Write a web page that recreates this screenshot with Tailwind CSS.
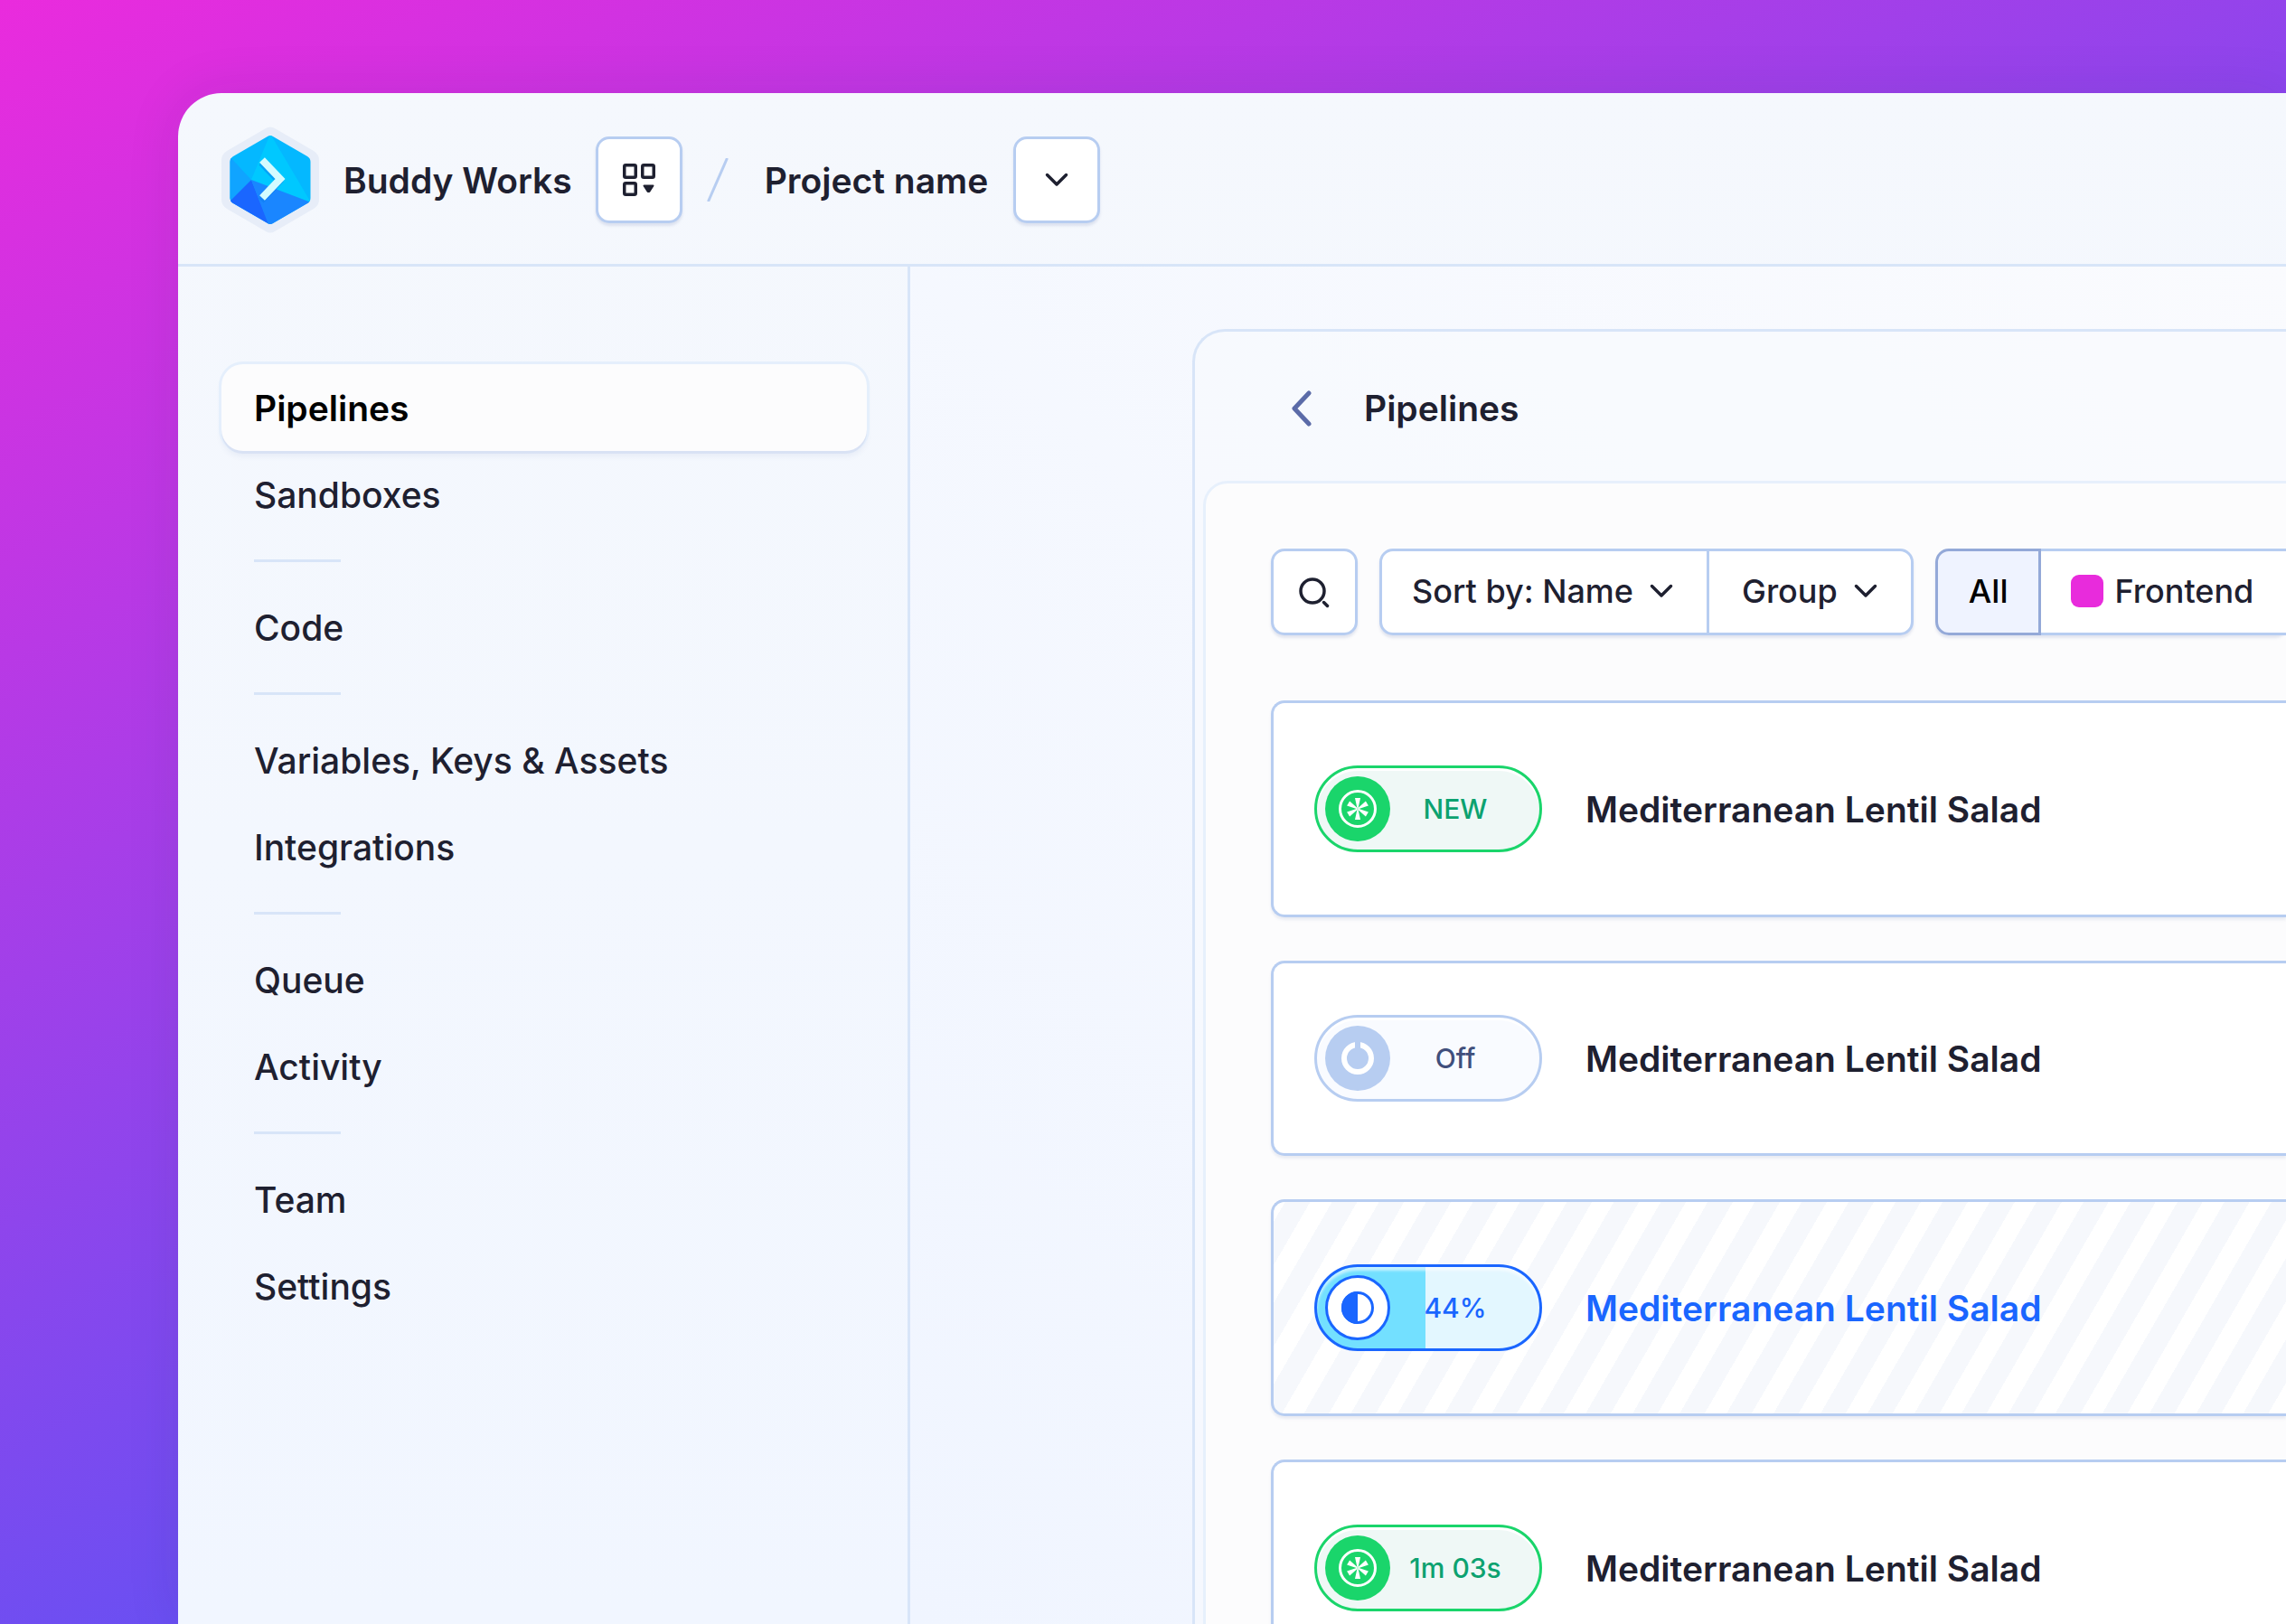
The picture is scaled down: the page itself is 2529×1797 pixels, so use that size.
<!DOCTYPE html>
<html lang="en">
<head>
<meta charset="utf-8">
<title>Buddy Works – Pipelines</title>
<script src="https://cdn.jsdelivr.net/npm/@tailwindcss/browser@4"></script>
</head>
<body class="h-screen overflow-hidden bg-[linear-gradient(153deg,#ea2bdd_0%,#1a66ff_100%)] pl-[197px] pt-[103px] font-['Inter',sans-serif] text-[#1e2030] antialiased">
<svg class="hidden" aria-hidden="true">
  <symbol id="chevron" viewBox="0 0 28 18"><path d="M3.500 3.500L14 14 24.500 3.500" fill="none" stroke="currentColor" stroke-width="3.500" stroke-linecap="round" stroke-linejoin="round"/></symbol>
  <symbol id="wheel" viewBox="0 0 42 42">
    <circle cx="21" cy="21" r="19.500" fill="none" stroke="#fff" stroke-width="3"/>
    <g fill="#fff">
      <path id="petal" d="M18 9h6l-2.500 11.500h-1z"/>
      <use href="#petal" transform="rotate(60 21 21)"/>
      <use href="#petal" transform="rotate(120 21 21)"/>
      <use href="#petal" transform="rotate(180 21 21)"/>
      <use href="#petal" transform="rotate(240 21 21)"/>
      <use href="#petal" transform="rotate(300 21 21)"/>
    </g>
  </symbol>
</svg>
<div class="flex h-full flex-col overflow-hidden rounded-tl-[48px] bg-linear-to-b from-[#f5f8fd] to-[#f1f6ff] shadow-[0_0_60px_rgba(30,30,80,0.1)]">
  <header class="flex shrink-0 items-center border-b-3 border-[#d8e5f8] pt-12 pb-[45px] pl-12 text-[39px] leading-12 font-semibold">
    <svg class="-my-3 h-[120px] w-[108px] shrink-0" viewBox="0 0 108 120" role="img" aria-label="Buddy">
      <path d="M49 3q5-3 10 0l43 25q6 4 6 10v44q0 6-6 10l-43 25q-5 3-10 0L6 92q-6-4-6-10V38q0-6 6-10z" fill="#e7edf8"/>
      <clipPath id="hex"><path d="M51 12q3-2 6 0l38 22q3.500 2 3.500 6v40q0 4-3.500 6l-38 22q-3 2-6 0L13 86q-3.500-2-3.500-6V40q0-4 3.500-6z"/></clipPath>
      <g clip-path="url(#hex)">
        <path d="M0 0h108v120H0z" fill="#04b8ff"/>
        <path d="M54 9L99 85 33 60z" fill="#00c8ff"/>
        <path d="M9 34l24 26L9 87z" fill="#10a4ff"/>
        <path d="M33 60L54 112 0 120V93z" fill="#1a66ff"/>
        <path d="M33 60L99 85v30H54z" fill="#1a86ff"/>
      </g>
      <path d="M44 41l20 21-20 21" fill="none" stroke="#0a7cf0" stroke-opacity=".5" stroke-width="7"/>
      <path d="M45 38l20 21-20 21" fill="none" stroke="#d4fbff" stroke-width="8"/>
    </svg>
    <span class="ml-[27px] pt-0.5">Buddy Works</span>
    <button aria-label="Switch workspace" class="ml-[26px] grid size-24 place-items-center rounded-[15px] border-3 border-[#b7cdf1] bg-white shadow-[0_3px_3px_rgba(80,100,160,0.15)]">
      <svg class="size-9" viewBox="0 0 36 36" fill="none" stroke="currentColor" stroke-width="3.500">
        <rect x="1.750" y="1.750" width="12.500" height="13.500" rx="1.500"/><rect x="21.750" y="1.750" width="12.500" height="13.500" rx="1.500"/><rect x="1.750" y="21.750" width="12.500" height="12.500" rx="1.500"/>
        <path d="M23.500 24.500h10l-4.200 6.500h-1.600z" fill="currentColor" stroke-width="2" stroke-linejoin="round"/>
      </svg>
    </button>
    <svg class="ml-[27px] h-12 w-6" viewBox="0 0 24 48"><path d="M1.500 48L22.500 0" stroke="#b7cdf1" stroke-width="3"/></svg>
    <span class="ml-10 pt-0.5">Project name</span>
    <button aria-label="Switch project" class="ml-7 grid size-24 place-items-center rounded-[15px] border-3 border-[#b7cdf1] bg-white shadow-[0_3px_3px_rgba(80,100,160,0.15)]"><svg class="h-[18px] w-7"><use href="#chevron"/></svg></button>
  </header>
  <div class="flex min-h-0 flex-1">
    <nav class="w-[810px] shrink-0 border-r-3 border-[#d8e5f8] pt-[108px] pr-[45px] pl-12 text-[39px] leading-12 font-medium">
      <a href="#" aria-current="page" class="flex h-24 items-center rounded-3xl bg-[#fcfcfd] px-9 pt-0.5 font-semibold text-black shadow-[0_3px_0_#d9e2f4,0_0_0_3px_#e5effc,0_6px_6px_rgba(80,100,160,0.08)]">Pipelines</a>
      <a href="#" class="flex h-24 items-center px-9 pt-0.5">Sandboxes</a>
      <hr class="mx-9 my-6 w-24 border-t-3 border-[#d8e5f8]">
      <a href="#" class="flex h-24 items-center px-9 pt-0.5">Code</a>
      <hr class="mx-9 my-6 w-24 border-t-3 border-[#d8e5f8]">
      <a href="#" class="flex h-24 items-center px-9 pt-0.5">Variables, Keys &amp; Assets</a>
      <a href="#" class="flex h-24 items-center px-9 pt-0.5">Integrations</a>
      <hr class="mx-9 my-6 w-24 border-t-3 border-[#d8e5f8]">
      <a href="#" class="flex h-24 items-center px-9 pt-0.5">Queue</a>
      <a href="#" class="flex h-24 items-center px-9 pt-0.5">Activity</a>
      <hr class="mx-9 my-6 w-24 border-t-3 border-[#d8e5f8]">
      <a href="#" class="flex h-24 items-center px-9 pt-0.5">Team</a>
      <a href="#" class="flex h-24 items-center px-9 pt-0.5">Settings</a>
    </nav>
    <main class="min-w-0 flex-1 bg-linear-to-bl from-[#fafbfe] to-[#f0f5ff] pt-[69px] pl-78">
      <div class="rounded-tl-[36px] border-t-3 border-l-3 border-[#d8e5f8] bg-[#f8fafd]/60 pl-[9px]">
        <div class="flex h-[165px] items-center pt-1 pl-24 text-[39px] leading-12 font-semibold">
          <a href="#" aria-label="Back"><svg class="h-10 w-6" viewBox="0 0 24 40"><path d="M21 3L5 20l16 17" fill="none" stroke="#5b6ba8" stroke-width="5" stroke-linecap="round" stroke-linejoin="round"/></svg></a>
          <h1 class="ml-[58px]">Pipelines</h1>
        </div>
        <div class="rounded-tl-[27px] border-t-3 border-l-3 border-[#e7f0fc] bg-[#fcfcfd] pt-18 pl-18">
          <div class="flex gap-6 text-[36px] leading-12 font-medium whitespace-nowrap">
            <button aria-label="Search" class="grid size-24 shrink-0 place-items-center rounded-[15px] border-3 border-[#b7cdf1] bg-white shadow-[0_3px_3px_rgba(80,100,160,0.15)]">
              <svg class="size-9" viewBox="0 0 36 36" fill="none" stroke="currentColor" stroke-width="3.500" stroke-linecap="round"><circle cx="16" cy="17" r="13"/><path d="M28.500 29.500l4 4"/></svg>
            </button>
            <div class="flex h-24 shrink-0 rounded-[15px] border-3 border-[#b7cdf1] bg-white shadow-[0_3px_3px_rgba(80,100,160,0.15)]">
              <button class="flex items-center gap-[17px] border-r-3 border-[#b7cdf1] pr-9 pb-0.5 pl-[33px]">Sort by: Name <svg class="h-[18px] w-7"><use href="#chevron"/></svg></button>
              <button class="flex items-center gap-[17px] px-9 pb-0.5">Group <svg class="h-[18px] w-7"><use href="#chevron"/></svg></button>
            </div>
            <div class="flex h-24 shrink-0 rounded-[15px] shadow-[0_3px_3px_rgba(80,100,160,0.15)]">
              <button class="rounded-l-[15px] border-3 border-[#94a9d8] bg-[#eff3ff] px-[34px] pb-0.5 text-black">All</button>
              <button class="flex items-center gap-3 border-y-3 border-r-3 border-[#b7cdf1] bg-white pr-9 pb-0.5 pl-[33px]"><span class="size-9 rounded-[9px] bg-[#e82bdc]"></span>Frontend</button>
            </div>
          </div>
          <ul class="mt-18 flex flex-col gap-12 text-[39px] leading-12 font-semibold">
            <li class="flex h-60 items-center gap-12 rounded-l-[15px] border-3 border-r-0 border-[#b7cdf1] bg-white pl-[45px] shadow-[0_3px_3px_rgba(80,100,160,0.1)]">
              <button class="flex h-24 w-63 items-center rounded-full border-3 border-[#1ad56b] bg-[#eff8f6] pr-[21px] pl-[9px] text-[30px] font-medium text-[#0ca270] shadow-[inset_0_3px_0_#fff]"><span class="grid size-18 place-items-center rounded-full bg-[#1ad56b]"><svg class="size-[42px]"><use href="#wheel"/></svg></span><span class="flex-1">NEW</span></button>
              <a href="#" class="pt-0.5">Mediterranean Lentil Salad</a>
            </li>
            <li class="flex h-54 items-center gap-12 rounded-l-[15px] border-3 border-r-0 border-[#b7cdf1] bg-white pl-[45px] shadow-[0_3px_3px_rgba(80,100,160,0.1)]">
              <button class="flex h-24 w-63 items-center rounded-full border-3 border-[#b7cdf1] bg-[#f9fbff] pr-[21px] pl-[9px] text-[30px] font-medium text-[#404f7c] shadow-[inset_0_3px_0_#fff]"><span class="grid size-18 place-items-center rounded-full bg-[#b7cdf1]"><svg class="size-9" viewBox="0 0 36 36"><circle cx="18" cy="18" r="15" fill="none" stroke="#fff" stroke-width="6"/><path d="M15 0h6v8h-6z" fill="#b7cdf1"/></svg></span><span class="flex-1">Off</span></button>
              <a href="#" class="pt-0.5">Mediterranean Lentil Salad</a>
            </li>
            <li class="flex h-60 items-center gap-12 rounded-l-[15px] border-3 border-r-0 border-[#b7cdf1] bg-white bg-[repeating-linear-gradient(120deg,#fff_0_11px,#f6f8fc_11px_35px,#fff_35px_45px)] pl-[45px] text-[#1a66ff] shadow-[0_3px_3px_rgba(80,100,160,0.1)]">
              <button class="flex h-24 w-63 items-center rounded-full border-3 border-[#1a66ff] bg-[linear-gradient(90deg,#73e0ff_120px,#e3f7ff_120px)] pr-[21px] pl-[9px] text-[30px] font-medium shadow-[inset_0_4px_3px_rgba(255,255,255,0.6)]"><span class="grid size-18 place-items-center rounded-full border-3 border-[#1a66ff] bg-white"><svg class="size-9" viewBox="0 0 36 36"><circle cx="18" cy="18" r="16.500" fill="none" stroke="#1a66ff" stroke-width="3"/><path d="M18 0a18 18 0 0 0 0 36z" fill="#1a66ff"/></svg></span><span class="flex-1">44%</span></button>
              <a href="#" class="pt-0.5">Mediterranean Lentil Salad</a>
            </li>
            <li class="flex h-60 items-center gap-12 rounded-l-[15px] border-3 border-r-0 border-[#b7cdf1] bg-white pl-[45px] shadow-[0_3px_3px_rgba(80,100,160,0.1)]">
              <button class="flex h-24 w-63 items-center rounded-full border-3 border-[#1ad56b] bg-[#eff8f6] pr-[21px] pl-[9px] text-[30px] font-medium text-[#0ca270] shadow-[inset_0_3px_0_#fff]"><span class="grid size-18 place-items-center rounded-full bg-[#1ad56b]"><svg class="size-[42px]"><use href="#wheel"/></svg></span><span class="flex-1">1m 03s</span></button>
              <a href="#" class="pt-0.5">Mediterranean Lentil Salad</a>
            </li>
          </ul>
        </div>
      </div>
    </main>
  </div>
</div>
</body>
</html>
